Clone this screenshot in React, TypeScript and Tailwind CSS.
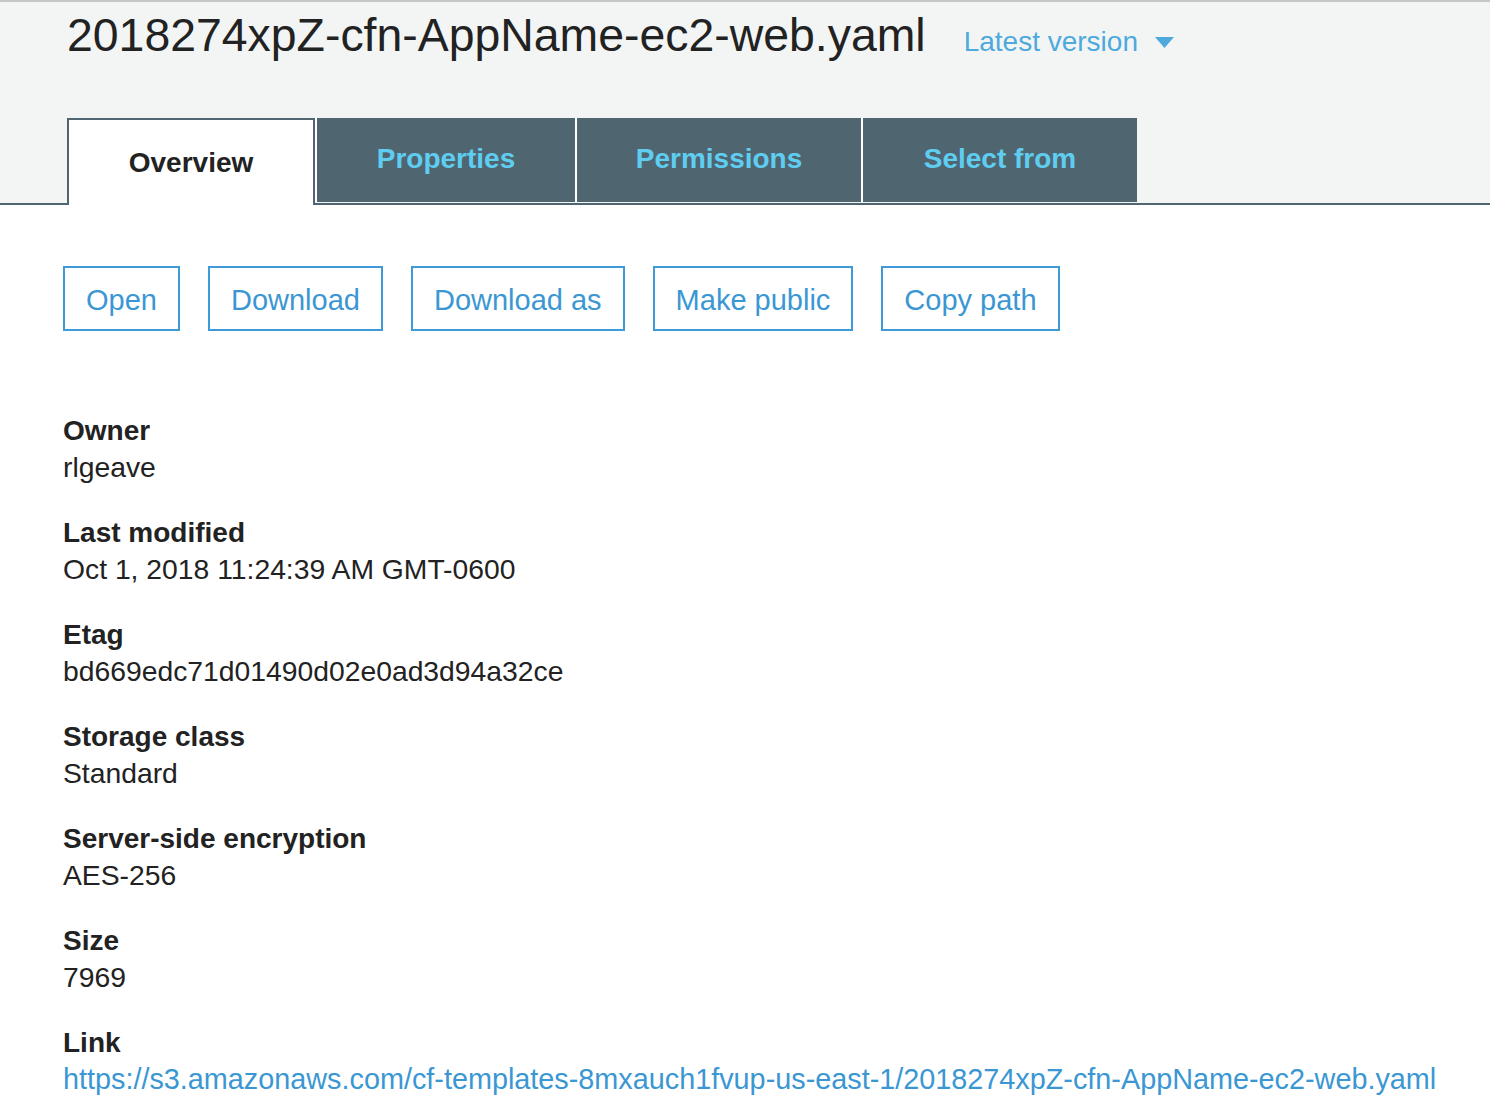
import React from 'react'

// 对象详情页：S3 对象概览
const fields = [
  { label: 'Owner', value: 'rlgeave' },
  { label: 'Last modified', value: 'Oct 1, 2018 11:24:39 AM GMT-0600' },
  { label: 'Etag', value: 'bd669edc71d01490d02e0ad3d94a32ce' },
  { label: 'Storage class', value: 'Standard' },
  { label: 'Server-side encryption', value: 'AES-256' },
  { label: 'Size', value: '7969' },
]

const actions = ['Open', 'Download', 'Download as', 'Make public', 'Copy path']

export default function App() {
  return (
    <div className="min-h-screen bg-white font-['Liberation_Sans',Arial,Helvetica,sans-serif] text-[#222]">
      {/* 顶部标题和标签页 */}
      <header className="bg-[#f3f5f5] border-t-2 border-[#c4c6c7]">
        <div className="flex items-baseline pl-[67px] pt-[10px]">
          <h1 className="text-[46.4px] leading-none font-normal text-[#222]">
            2018274xpZ-cfn-AppName-ec2-web.yaml
          </h1>
          <button className="ml-[38px] flex items-center text-[28px] leading-none text-[#4ea9dd]">
            Latest version
            <svg className="ml-[17px]" width="19" height="11" viewBox="0 0 19 11">
              <path d="M0 0 L19 0 L9.5 11 Z" fill="#4ea9dd" />
            </svg>
          </button>
        </div>

        <div className="mt-[60px] flex items-start pl-[67px] border-b-2 border-[#4f6672]">
          <div className="-mb-[2px] flex h-[87px] w-[248px] items-center justify-center border-2 border-b-0 border-[#4f6672] bg-white text-[28px] font-bold">
            Overview
          </div>
          {[
            { name: 'Properties', w: 'w-[260px]' },
            { name: 'Permissions', w: 'w-[286px]' },
            { name: 'Select from', w: 'w-[276px]' },
          ].map((t) => (
            <div
              key={t.name}
              className={`${t.w} flex h-[84px] items-center justify-center border-l-2 border-white bg-[#4f6570] pb-[2px] text-[28px] font-bold text-[#5fcdf0]`}
            >
              {t.name}
            </div>
          ))}
        </div>
      </header>

      {/* 内容区 */}
      <main className="pl-[63px]">
        <div className="mt-[61px] flex gap-[28px]">
          {actions.map((a) => (
            <button
              key={a}
              className="flex h-[65px] items-center border-2 border-[#3f9bd8] px-[21px] pt-[3px] text-[29px] text-[#3b97d3]"
            >
              {a}
            </button>
          ))}
        </div>

        <dl className="mt-[81px] flex flex-col gap-[28px] leading-[37px]">
          {fields.map((f) => (
            <div key={f.label}>
              <dt className="text-[28px] font-bold">{f.label}</dt>
              <dd className="text-[28.3px]">{f.value}</dd>
            </div>
          ))}
          <div>
            <dt className="text-[28px] font-bold">Link</dt>
            <dd className="text-[28.8px]">
              <a className="text-[#3b97d3]" href="#">
                https://s3.amazonaws.com/cf-templates-8mxauch1fvup-us-east-1/2018274xpZ-cfn-AppName-ec2-web.yaml
              </a>
            </dd>
          </div>
        </dl>
      </main>
    </div>
  )
}
